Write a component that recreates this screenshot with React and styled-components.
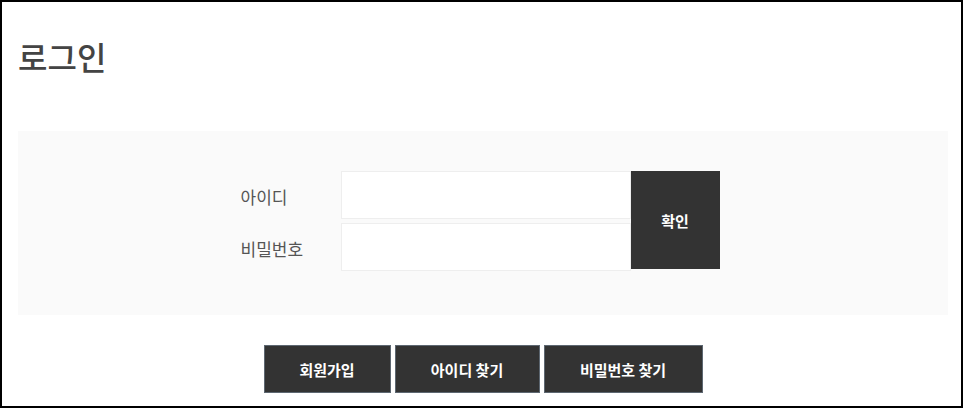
import React from "react";
import styled, { createGlobalStyle } from "styled-components";

const GlobalStyle = createGlobalStyle`
  * {
    box-sizing: border-box;
  }
  body {
    margin: 0;
    font-family: "Noto Sans CJK KR", "Noto Sans", sans-serif;
    color: #555;
  }
`;

const Frame = styled.div`
  width: 963px;
  height: 408px;
  border: 2px solid #000;
  padding: 0 0 0 16px;
  overflow: hidden;
`;

const Title = styled.h2`
  margin: 0;
  padding-top: 30px;
  height: 129px;
  font-size: 32px;
  font-weight: 500;
  color: #444;
  line-height: 48px;
`;

const Panel = styled.div`
  width: 930px;
  height: 184px;
  background-color: #fafafa;
  display: flex;
  justify-content: center;
  padding-top: 40px;
`;

const Form = styled.form`
  display: flex;
  align-items: flex-start;
  margin-left: -6px;
`;

const Fields = styled.div`
  display: flex;
  flex-direction: column;
  gap: 4px;
`;

const Row = styled.div`
  display: flex;
  align-items: center;
`;

const Label = styled.label`
  width: 100px;
  font-size: 17px;
  color: #555;
  padding-top: 2px;
`;

const Input = styled.input`
  width: 290px;
  height: 48px;
  border: 1px solid #eeeeee;
  background: #fff;
  outline: none;
  padding: 0 10px;
`;

const Submit = styled.button`
  width: 89px;
  height: 98px;
  border: 0;
  background-color: #333;
  color: #fff;
  font-family: inherit;
  font-size: 15px;
  font-weight: 700;
  cursor: pointer;
`;

const Links = styled.div`
  display: flex;
  justify-content: center;
  gap: 4px;
  margin-top: 30px;
  margin-left: -13px;
`;

const LinkButton = styled.button`
  width: ${(p) => p.$w}px;
  height: 48px;
  border: 1px solid #5d6771;
  background-color: #333;
  color: #fff;
  font-family: inherit;
  font-size: 15px;
  font-weight: 700;
  cursor: pointer;
`;

const links = [
  { title: "회원가입", width: 127 },
  { title: "아이디 찾기", width: 145 },
  { title: "비밀번호 찾기", width: 159 },
];

const App = () => {
  return (
    <>
      <GlobalStyle />
      <Frame>
        <Title>로그인</Title>
        <Panel>
          <Form onSubmit={(e) => e.preventDefault()}>
            <Fields>
              <Row>
                <Label>아이디</Label>
                <Input type="text" />
              </Row>
              <Row>
                <Label>비밀번호</Label>
                <Input type="password" />
              </Row>
            </Fields>
            <Submit type="submit">확인</Submit>
          </Form>
        </Panel>
        <Links>
          {links.map((item, index) => (
            <LinkButton key={index} $w={item.width}>
              {item.title}
            </LinkButton>
          ))}
        </Links>
      </Frame>
    </>
  );
};

export default App;
